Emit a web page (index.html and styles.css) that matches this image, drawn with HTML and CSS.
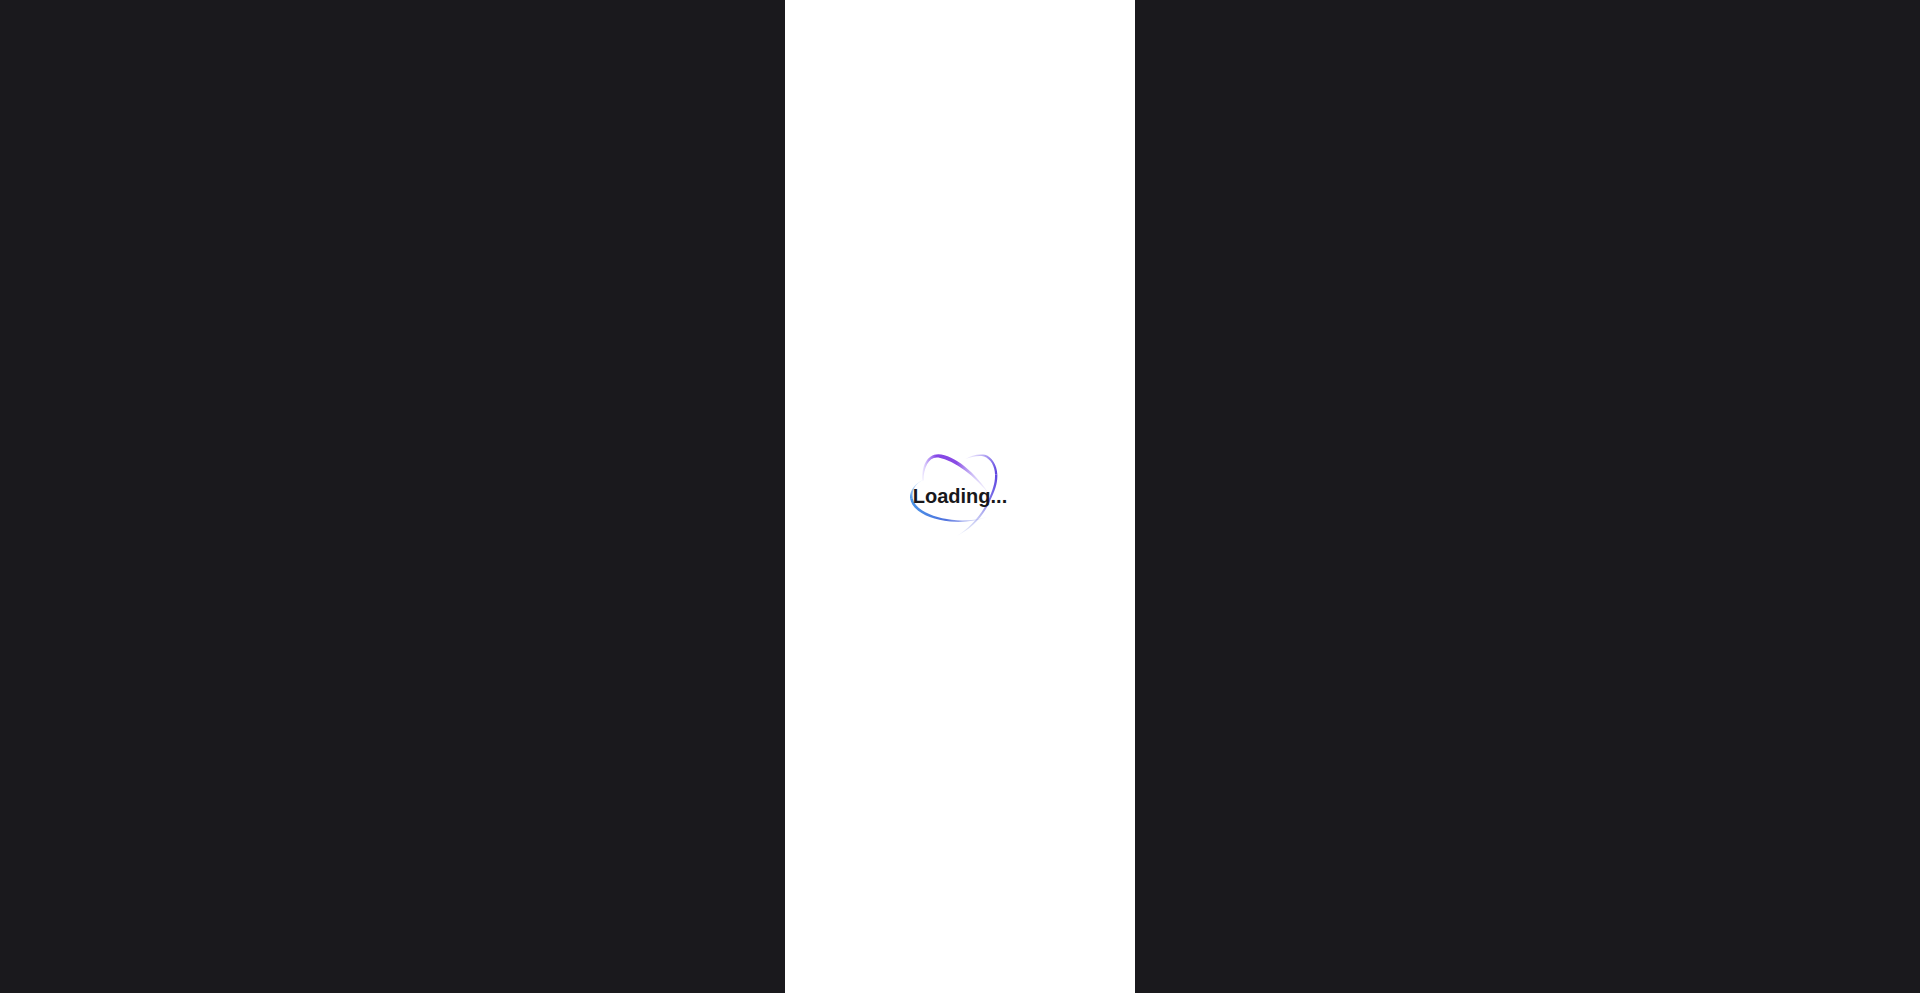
FILE: index.html
```html
<!DOCTYPE html>
<html lang="en">
<head>
    <meta charset="UTF-8">
    <meta name="viewport" content="width=device-width, initial-scale=1.0">
    <title>Loading</title>
    <link rel="stylesheet" href="styles.css">
</head>
<body>
    <div class="phone">
        <div class="loader">
            <svg class="loader-rings" viewBox="0 19.5 480 360" aria-hidden="true">
                <defs>
                    <linearGradient id="ringA" gradientUnits="userSpaceOnUse" x1="128" y1="0" x2="332" y2="0">
                        <stop offset="0" stop-color="#a78bfa" stop-opacity="0.2"/>
                        <stop offset="0.08" stop-color="#9a6cf0" stop-opacity="0.65"/>
                        <stop offset="0.2" stop-color="#8445e6"/>
                        <stop offset="0.5" stop-color="#8a4be4"/>
                        <stop offset="0.75" stop-color="#a58af0" stop-opacity="0.5"/>
                        <stop offset="1" stop-color="#b8a8f5" stop-opacity="0.05"/>
                    </linearGradient>
                    <linearGradient id="ringB1" gradientUnits="userSpaceOnUse" x1="255" y1="86" x2="348" y2="125">
                        <stop offset="0" stop-color="#b9a8f5" stop-opacity="0.15"/>
                        <stop offset="0.55" stop-color="#8d78ec" stop-opacity="0.75"/>
                        <stop offset="1" stop-color="#5f46e0"/>
                    </linearGradient>
                    <linearGradient id="ringB2" gradientUnits="userSpaceOnUse" x1="348" y1="132" x2="230" y2="316">
                        <stop offset="0" stop-color="#5f46e0"/>
                        <stop offset="0.3" stop-color="#6a5ce4" stop-opacity="0.9"/>
                        <stop offset="0.6" stop-color="#8f90ea" stop-opacity="0.6"/>
                        <stop offset="0.85" stop-color="#a9b4ee" stop-opacity="0.4"/>
                        <stop offset="1" stop-color="#b9c4f2" stop-opacity="0.1"/>
                    </linearGradient>
                    <linearGradient id="ringC1" gradientUnits="userSpaceOnUse" x1="132" y1="146" x2="92" y2="205">
                        <stop offset="0" stop-color="#a9c8f5" stop-opacity="0.15"/>
                        <stop offset="1" stop-color="#4a94e8"/>
                    </linearGradient>
                    <linearGradient id="ringC2" gradientUnits="userSpaceOnUse" x1="92" y1="0" x2="324" y2="0">
                        <stop offset="0" stop-color="#4a94e8"/>
                        <stop offset="0.45" stop-color="#4f72de"/>
                        <stop offset="0.72" stop-color="#7d8ae8" stop-opacity="0.6"/>
                        <stop offset="1" stop-color="#b5b8f2" stop-opacity="0.05"/>
                    </linearGradient>
                </defs>
                <path fill="url(#ringA)" d="M128 150C123 110 140 71 175 71C222 73 287 125 332 197C283 134 225 91 175 81C147 77 131 110 130 150Z"/>
                <path fill="url(#ringB1)" d="M255 86C272 74 298 69 315 73C336 79 351 105 352 132L345 132C345 108 332 85 312 78C296 74 272 79 255 86Z"/>
                <path fill="url(#ringB2)" d="M352 132C353 160 344 180 333 205C313 256 273 296 228 318C271 292 307 250 327 205C337 180 346 158 345 132Z"/>
                <path fill="url(#ringC1)" d="M133 147C107 158 95 178 98 203L90 203C88 180 108 155 133 147Z"/>
                <path fill="url(#ringC2)" d="M90 203C97 243 150 267 210 273C250 277 295 271 324 258C295 268 255 273 215 268C160 261 106 240 98 203Z"/>
            </svg>
            <span class="loader-text">Loading...</span>
        </div>
    </div>
</body>
</html>
```

FILE: styles.css
```css
* {
    box-sizing: border-box;
    margin: 0;
    padding: 0;
}
body {
    font-family: "Liberation Sans", Arial, sans-serif;
    background: #1a191d;
    height: 100vh;
    overflow: hidden;
    display: flex;
    justify-content: center;
}
.phone {
    width: 350px;
    height: 100%;
    background: #fff;
    display: flex;
    align-items: center;
    justify-content: center;
}
.loader {
    display: grid;
    place-items: center;
}
.loader-rings {
    grid-area: 1 / 1;
    width: 160px;
    height: 120px;
    display: block;
}
.loader-text {
    grid-area: 1 / 1;
    font-size: 20px;
    font-weight: 700;
    line-height: 23px;
    color: #18181b;
}
```
